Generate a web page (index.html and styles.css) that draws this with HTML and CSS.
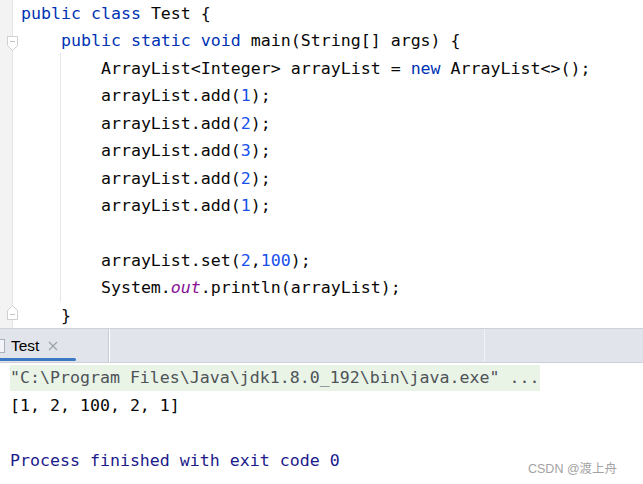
FILE: index.html
```html
<!DOCTYPE html>
<html lang="en">
<head>
    <meta charset="UTF-8">
    <title>Test.java</title>
    <link rel="stylesheet" href="styles.css">
</head>
<body>
    <div class="editor">
        <div class="gutter">
            <svg class="fold fold-open" width="13" height="17" viewBox="0 0 13 17">
                <path d="M1.5 1.5 H11.5 V10.5 L6.5 15.5 L1.5 10.5 Z" fill="#ffffff" stroke="#cfcfcf"/>
                <path d="M4 6.5 H9" stroke="#c4c4c4"/>
            </svg>
            <svg class="fold fold-close" width="13" height="17" viewBox="0 0 13 17">
                <path d="M1.5 15.5 H11.5 V6.5 L6.5 1.5 L1.5 6.5 Z" fill="#ffffff" stroke="#cfcfcf"/>
                <path d="M4 10.5 H9" stroke="#c4c4c4"/>
            </svg>
        </div>
        <div class="code">
            <span class="guide"></span>
            <div class="line"><span class="kw">public class</span> Test {</div>
            <div class="line">    <span class="kw">public static void</span> main(String[] args) {</div>
            <div class="line">        ArrayList&lt;Integer&gt; arrayList = <span class="kw">new</span> ArrayList&lt;&gt;();</div>
            <div class="line">        arrayList.add(<span class="num">1</span>);</div>
            <div class="line">        arrayList.add(<span class="num">2</span>);</div>
            <div class="line">        arrayList.add(<span class="num">3</span>);</div>
            <div class="line">        arrayList.add(<span class="num">2</span>);</div>
            <div class="line">        arrayList.add(<span class="num">1</span>);</div>
            <div class="line"> </div>
            <div class="line">        arrayList.set(<span class="num">2</span>,<span class="num">100</span>);</div>
            <div class="line">        System.<span class="field">out</span>.println(arrayList);</div>
            <div class="line">    }</div>
        </div>
    </div>

    <div class="tool-header">
        <div class="tab">
            <span class="tab-icon"></span>
            <span class="tab-title">Test</span>
            <svg class="tab-close" width="10" height="10" viewBox="0 0 10 10">
                <path d="M1 1 L9 9 M9 1 L1 9" stroke="#9aa0aa" stroke-width="1.2"/>
            </svg>
        </div>
        <div class="tool-split"></div>
        <div class="tool-split right"></div>
    </div>

    <div class="console">
        <div class="cline"><span class="cmd">"C:\Program Files\Java\jdk1.8.0_192\bin\java.exe" ...</span></div>
        <div class="cline">[1, 2, 100, 2, 1]</div>
        <div class="cline"> </div>
        <div class="cline exit">Process finished with exit code 0</div>
        <div class="watermark">CSDN @渡上舟</div>
    </div>
</body>
</html>
```

FILE: styles.css
```css
body {
    margin: 0;
    width: 643px;
    height: 484px;
    overflow: hidden;
    background-color: #ffffff;
    font-family: 'DejaVu Sans Mono', monospace;
    font-size: 16.6px;
    color: #080808;
}
.editor {
    display: flex;
    height: 328px;
    overflow: hidden;
}
.gutter {
    position: relative;
    width: 12px;
    background-color: #f3f3f3;
    border-right: 1px solid #e4e4e4;
    flex-shrink: 0;
}
.fold {
    position: absolute;
    left: 6px;
}
.fold-open {
    top: 35px;
}
.fold-close {
    top: 304px;
}
.code {
    position: relative;
    padding-left: 8px;
}
.guide {
    position: absolute;
    left: 47px;
    top: 53px;
    height: 249px;
    width: 1px;
    background-color: #e6e6e6;
}
.line {
    height: 27.45px;
    line-height: 27.45px;
    white-space: pre;
}
.kw {
    color: #0033b3;
}
.num {
    color: #1750eb;
}
.field {
    color: #871094;
    font-style: italic;
}
.tool-header {
    display: flex;
    height: 33px;
    background-color: #e2e4eb;
    border-top: 1px solid #cfd1d8;
    border-bottom: 1px solid #cfd1d8;
}
.tab {
    position: relative;
    display: flex;
    align-items: center;
    width: 108px;
    font-family: 'Liberation Sans', Arial, sans-serif;
    font-size: 15.5px;
    color: #000000;
}
.tab::after {
    content: "";
    position: absolute;
    left: 0;
    bottom: 1px;
    width: 76px;
    height: 3px;
    border-radius: 0 2px 2px 0;
    background-color: #3c78c4;
}
.tab-icon {
    width: 5px;
    height: 12px;
    margin-left: -1px;
    border: 1px solid #a9b0bc;
    border-left: none;
    background-color: #f4f5f8;
}
.tab-title {
    margin-left: 6px;
}
.tab-close {
    margin-left: 9px;
}
.tool-split {
    width: 1px;
    background-color: #ffffff;
    border-left: 1px solid #c8cbd2;
}
.tool-split.right {
    margin-left: 374px;
    background-color: #f1f2f5;
    border-left: none;
}
.console {
    position: relative;
    padding-top: 1px;
    padding-left: 10px;
}
.cline {
    height: 27.5px;
    line-height: 27.5px;
    white-space: pre;
}
.cmd {
    display: inline-block;
    line-height: 26px;
    background-color: #e9f4e7;
    color: #4f5358;
}
.exit {
    color: #1b1a8a;
}
.watermark {
    position: absolute;
    left: 528px;
    top: 95px;
    font-family: 'Liberation Sans', 'Noto Sans CJK SC', sans-serif;
    font-size: 12.5px;
    color: #a3a3a3;
}
```
